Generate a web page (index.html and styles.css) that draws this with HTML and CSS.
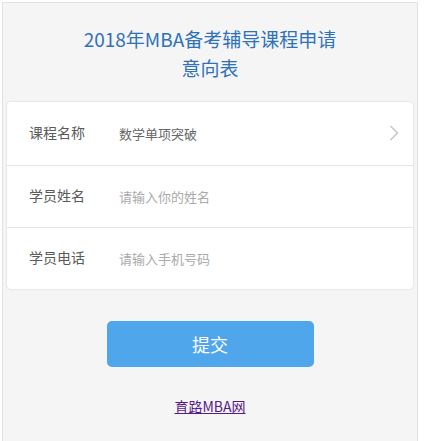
FILE: index.html
```html
<!DOCTYPE html>
<html lang="zh-CN">
<head>
    <meta charset="UTF-8">
    <meta name="viewport" content="width=device-width, initial-scale=1.0">
    <title>课程申请意向表</title>
    <link rel="stylesheet" href="styles.css">
</head>
<body>

    <div class="page">
        <h1 class="page__title">2018年MBA备考辅导课程申请意向表</h1>

        <form class="apply" action="#">
            <div class="apply__list">
                <div class="apply__row">
                    <span class="apply__label">课程名称</span>
                    <span class="apply__value">数学单项突破</span>
                    <svg class="apply__arrow" width="10" height="16" viewBox="0 0 10 16" aria-hidden="true">
                        <polyline points="1.5,1 8.5,8 1.5,15" fill="none" stroke="#c4c4c4" stroke-width="1.4"/>
                    </svg>
                </div>
                <label class="apply__row">
                    <span class="apply__label">学员姓名</span>
                    <input type="text" class="apply__input" placeholder="请输入你的姓名">
                </label>
                <label class="apply__row">
                    <span class="apply__label">学员电话</span>
                    <input type="tel" class="apply__input" placeholder="请输入手机号码">
                </label>
            </div>

            <button type="submit" class="apply__btn">提交</button>
        </form>

        <p class="page__footer"><a href="#" class="page__link">育路MBA网</a></p>
    </div>

</body>
</html>
```

FILE: styles.css
```css
*,
*::before,
*::after {
    box-sizing: border-box;
}

body {
    font-family: "Noto Sans CJK SC", "Noto Sans", sans-serif;
    margin: 0;
    padding: 2px 0 0 2px;
    background-color: #fff;
}

h1,
p {
    margin: 0;
}

button,
input {
    font: inherit;
    color: inherit;
}

.page {
    width: 416px;
    min-height: 460px;
    background-color: #f5f5f5;
    border: 1px solid #e2e2e2;
    padding: 0 4px;
}

.page__title {
    font-size: 19px;
    font-weight: 400;
    line-height: 29px;
    color: #2f72b9;
    text-align: center;
    padding: 21px 68px 0;
    margin-bottom: 20px;
}

.apply__list {
    background-color: #fff;
    border-radius: 4px;
    box-shadow: 0 0 2px rgba(0, 0, 0, 0.18);
}

.apply__row {
    display: flex;
    align-items: center;
    height: 62px;
    padding: 0 14px 0 22px;
    border-top: 1px solid #e4e4e4;
}

.apply__row:first-child {
    border-top: 0;
    height: 63px;
}

.apply__label {
    width: 90px;
    flex-shrink: 0;
    font-size: 14px;
    color: #5a5a5a;
    margin-top: -3px;
}

.apply__value {
    flex: 1;
    font-size: 13px;
    color: #666;
}

.apply__arrow {
    flex-shrink: 0;
    margin-top: -2px;
}

.apply__input {
    flex: 1;
    min-width: 0;
    font-size: 13px;
    color: #666;
    border: 0;
    outline: none;
    background: transparent;
    padding: 0;
}

.apply__input::placeholder {
    color: #aaa;
}

.apply__btn {
    display: block;
    width: 207px;
    height: 46px;
    margin: 32px auto 0;
    border: 0;
    border-radius: 5px;
    background-color: #50a6ea;
    color: #fff;
    font-size: 18px;
    cursor: pointer;
}

.page__footer {
    text-align: center;
    font-size: 14px;
    margin-top: 29px;
}

.page__link {
    color: #551a8b;
    text-decoration: underline;
}
```
